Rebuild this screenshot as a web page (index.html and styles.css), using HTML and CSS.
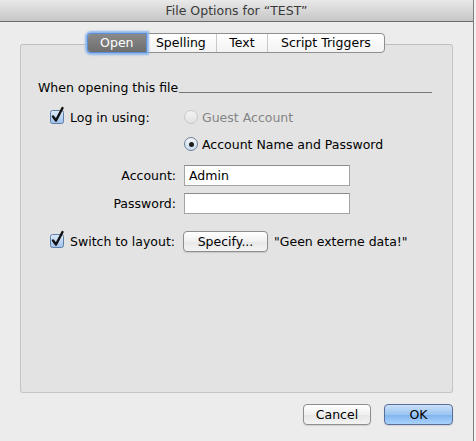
FILE: index.html
```html
<!DOCTYPE html>
<html>
<head>
<meta charset="utf-8">
<link rel="stylesheet" href="styles.css">
</head>
<body>
<div class="window">
  <div class="titlebar">File Options for “TEST”</div>
  <div class="content">
    <div class="box">
      <div class="tabs">
        <div class="tab sel">Open</div>
        <div class="tab">Spelling</div>
        <div class="tab sep">Text</div>
        <div class="tab sep">Script Triggers</div>
      </div>
      <div class="heading"><span>When opening this file</span><span class="rule"></span></div>
      <div class="form">
        <div class="row r1">
          <div class="lbl left">
            <svg class="cb" width="16" height="18" viewBox="0 0 16 18"><defs><linearGradient id="g1" x1="0" y1="0" x2="0" y2="1"><stop offset="0" stop-color="#dceaf9"/><stop offset="1" stop-color="#9fc1ea"/></linearGradient></defs><rect x="0.5" y="4.5" width="13" height="13" rx="2" fill="url(#g1)" stroke="#5f7ea6"/><path d="M3 10.5 L6 14.5 L12.5 2" fill="none" stroke="#111" stroke-width="2.4" stroke-linecap="round" stroke-linejoin="round"/></svg>
            <span>Log in using:</span>
          </div>
          <div class="val"><span class="radio off"></span><span class="dis">Guest Account</span></div>
        </div>
        <div class="row r2">
          <div class="lbl"></div>
          <div class="val"><span class="radio on"><span class="dot"></span></span><span>Account Name and Password</span></div>
        </div>
        <div class="row r3">
          <div class="lbl">Account:</div>
          <div class="val"><div class="input">Admin</div></div>
        </div>
        <div class="row r4">
          <div class="lbl">Password:</div>
          <div class="val"><div class="input"></div></div>
        </div>
        <div class="row r5">
          <div class="lbl left">
            <svg class="cb" width="16" height="18" viewBox="0 0 16 18"><defs><linearGradient id="g2" x1="0" y1="0" x2="0" y2="1"><stop offset="0" stop-color="#dceaf9"/><stop offset="1" stop-color="#9fc1ea"/></linearGradient></defs><rect x="0.5" y="4.5" width="13" height="13" rx="2" fill="url(#g2)" stroke="#5f7ea6"/><path d="M3 10.5 L6 14.5 L12.5 2" fill="none" stroke="#111" stroke-width="2.4" stroke-linecap="round" stroke-linejoin="round"/></svg>
            <span>Switch to layout:</span>
          </div>
          <div class="val"><div class="btn specify">Specify...</div><span class="note">"Geen externe data!"</span></div>
        </div>
      </div>
    </div>
    <div class="footer">
      <div class="btn cancel">Cancel</div>
      <div class="btn ok">OK</div>
    </div>
  </div>
</div>
</body>
</html>
```

FILE: styles.css
```css
html, body {
  margin: 0;
  padding: 0;
  background: #f2f2f2;
  width: 476px;
  height: 441px;
  overflow: hidden;
}
body {
  font-family: "DejaVu Sans", sans-serif;
  font-size: 12.5px;
  color: #000;
}
.window {
  width: 473px;
  height: 441px;
  background: #ececec;
  border-right: 1px solid #7f7f7f;
  box-sizing: content-box;
}
.titlebar {
  height: 21px;
  line-height: 21px;
  text-align: center;
  color: #3a3a3a;
  font-size: 12.5px;
  background: linear-gradient(#e9e9e9, #c6c6c6);
  border-bottom: 1px solid #6b6b6b;
}
.content {
  padding: 0 20px;
}
.box {
  margin-top: 22px;
  height: 349px;
  box-sizing: border-box;
  background: #e3e3e3;
  border: 1px solid #c4c4c4;
  border-top-color: #bdbdbd;
  border-radius: 3px;
  padding: 0 20px 0 17px;
}
.tabs {
  display: flex;
  width: 298px;
  height: 20px;
  margin: -12px auto 0;
  background: linear-gradient(#ffffff, #f3f3f3);
  border: 1px solid #8e8e8e;
  border-radius: 4px;
  box-sizing: border-box;
  position: relative;
  left: 1px;
}
.tab {
  height: 18px;
  line-height: 18px;
  text-align: center;
  font-size: 12.5px;
}
.tab:nth-child(1) { width: 58px; }
.tab:nth-child(2) { width: 71px; }
.tab:nth-child(3) { width: 50px; }
.tab:nth-child(4) { width: 117px; }
.tab.sep { border-left: 1px solid #c9c9c9; }
.tab.sel {
  background: linear-gradient(#8a8a8a, #6e6e6e);
  color: #fff;
  border-radius: 3px 0 0 3px;
  box-shadow: 0 0 0 1px #5d8fd6, 0 0 2px 3px #8fb6ea;
  position: relative;
}
.heading {
  display: flex;
  align-items: baseline;
  margin-top: 27px;
  height: 16px;
  line-height: 16px;
}
.heading .rule {
  flex: 1;
  border-bottom: 1px solid #777;
  margin-left: 1px;
  position: relative;
  top: 1px;
}
.form {
  padding-left: 12px;
}
.row {
  display: flex;
  align-items: center;
  height: 20px;
}
.r1 { margin-top: 11px; }
.r2 { margin-top: 7px; }
.r3 { margin-top: 11px; height: 21px; }
.r4 { margin-top: 7px; height: 21px; }
.r5 { margin-top: 17px; }
.lbl {
  width: 134px;
  flex: none;
  box-sizing: border-box;
  padding-right: 8px;
  text-align: right;
}
.lbl.left {
  display: flex;
  align-items: center;
  text-align: left;
}
.cb {
  margin-top: -5px;
  margin-right: 4px;
  overflow: visible;
}
.val {
  display: flex;
  align-items: center;
}
.radio {
  width: 14px;
  height: 14px;
  border-radius: 50%;
  box-sizing: border-box;
  margin-right: 4px;
  display: flex;
  align-items: center;
  justify-content: center;
}
.radio.off {
  border: 1px solid #c8c8c8;
  background: linear-gradient(#f4f4f4, #e2e2e2);
}
.radio.on {
  border: 1px solid #6e7f99;
  background: linear-gradient(#f2f6fb, #c9daef);
}
.dot {
  width: 5px;
  height: 5px;
  border-radius: 50%;
  background: #1d1d1d;
}
.dis { color: #858585; }
.input {
  width: 166px;
  height: 21px;
  box-sizing: border-box;
  background: #fff;
  border: 1px solid #a4a4a4;
  border-top-color: #8c8c8c;
  padding-left: 4px;
  line-height: 19px;
}
.btn {
  height: 21px;
  box-sizing: border-box;
  border: 1px solid #8e8e8e;
  border-radius: 4px;
  background: linear-gradient(#ffffff, #f0f0f0 50%, #e6e6e6 51%, #f4f4f4);
  text-align: center;
  line-height: 19px;
  box-shadow: 0 1px 1px rgba(0,0,0,0.12);
}
.specify {
  width: 85px;
  margin-left: -1px;
}
.note { margin-left: 6px; }
.footer {
  display: flex;
  justify-content: flex-end;
  gap: 13px;
  margin-top: 11px;
}
.cancel { width: 68px; }
.ok {
  width: 69px;
  border-color: #5b6e98;
  background: linear-gradient(#c9e0f8, #9cc5f1 50%, #7fb3ee 51%, #a9d2fb);
}
```
